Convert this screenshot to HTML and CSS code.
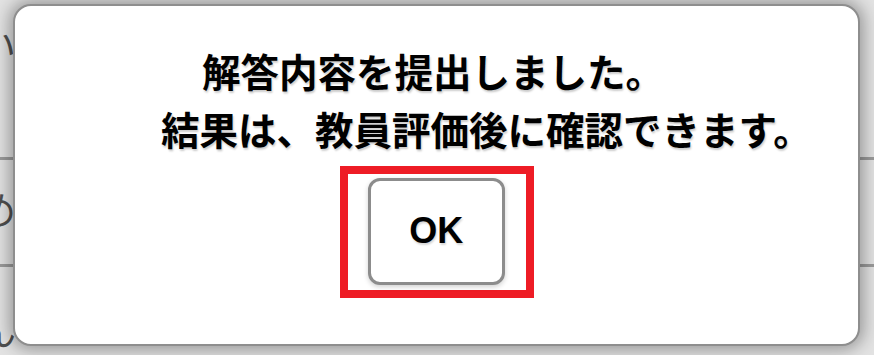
FILE: index.html
```html
<!DOCTYPE html>
<html lang="ja">
<head>
<meta charset="utf-8">
<title>提出完了</title>
<link rel="stylesheet" href="styles.css">
</head>
<body>
<div class="backdrop">
  <div class="row row-1"><div class="cell"><span>答えい</span></div></div>
  <div class="row row-2"><div class="cell"><span>はじめ</span></div></div>
  <div class="row row-3"><div class="cell"><span>ごはん</span></div></div>
</div>
<div class="dialog" role="dialog">
  <div class="message">
    <div class="line">解答内容を提出しました。</div>
    <div class="line">結果は、教員評価後に確認できます。</div>
  </div>
  <div class="actions">
    <div class="highlight">
      <button class="ok" type="button">OK</button>
    </div>
  </div>
</div>
</body>
</html>
```
FILE: styles.css
```css
html, body {
  margin: 0;
  padding: 0;
}
body {
  width: 874px;
  height: 355px;
  overflow: hidden;
  position: relative;
  background: #e2e2e2;
  font-family: "Noto Sans CJK JP", "Noto Sans", sans-serif;
}
.backdrop {
  display: flex;
  flex-direction: column;
  height: 355px;
}
.row {
  border-bottom: 3px solid #9a9a9a;
  box-sizing: content-box;
}
.row-1 { height: 157px; }
.row-2 { height: 104px; }
.row-3 { flex: 1; border-bottom: none; }
.cell {
  width: 16px;
  overflow: hidden;
  display: flex;
  justify-content: flex-end;
  font-size: 38px;
  line-height: 44px;
  color: #4f4f4f;
  white-space: nowrap;
}
.row-1 .cell { margin-top: 22px; }
.row-2 .cell { margin-top: 26px; }
.row-3 .cell { margin-top: 40px; }

.dialog {
  position: absolute;
  left: 13px;
  top: 4px;
  width: 847px;
  height: 342px;
  box-sizing: border-box;
  background: #ffffff;
  border: 2.5px solid #8e8e8e;
  border-radius: 18px;
  box-shadow: 0 0 16px 4px rgba(0, 0, 0, 0.32);
  padding-top: 35px;
}
.message {
  width: 544px;
  margin-left: 146px;
  text-align: center;
  white-space: nowrap;
  font-size: 38.5px;
  line-height: 58px;
  font-weight: 700;
  color: #000;
  text-shadow: 1px 2px 2px rgba(0, 0, 0, 0.2);
}
.actions {
  display: flex;
  justify-content: center;
  padding-left: 1px;
  margin-top: 9px;
}
.highlight {
  border: 8.5px solid #ee1c25;
  padding: 3.5px 21px 5.5px 19.5px;
}
.ok {
  display: block;
  width: 137px;
  height: 107px;
  box-sizing: border-box;
  background: #fff;
  border: 3px solid #8c8c8c;
  border-radius: 12px;
  box-shadow: 0 2px 5px rgba(0, 0, 0, 0.18);
  font-family: "Liberation Sans", Arial, sans-serif;
  font-weight: 700;
  font-size: 36px;
  color: #000;
  text-shadow: 1px 2px 2px rgba(0, 0, 0, 0.16);
  padding: 0;
  margin: 0;
}
```
